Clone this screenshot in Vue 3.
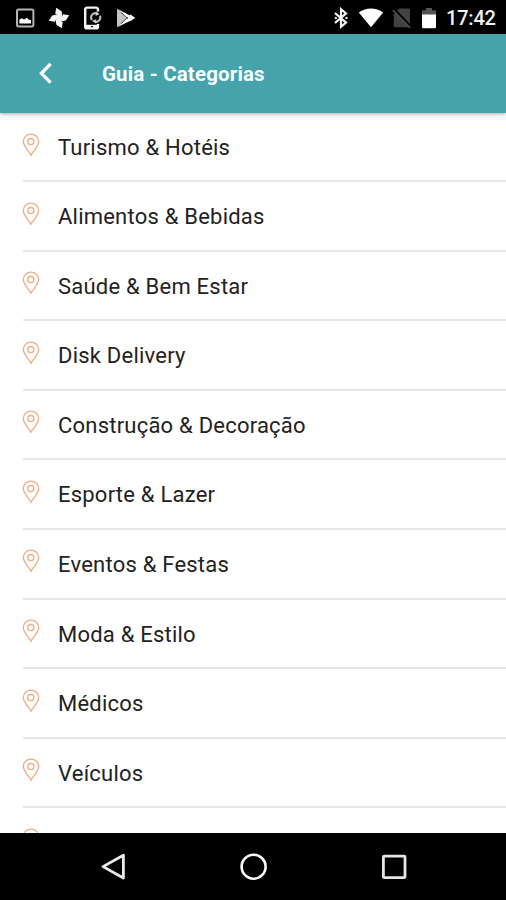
<script setup>
const categories = [
  'Turismo & Hotéis',
  'Alimentos & Bebidas',
  'Saúde & Bem Estar',
  'Disk Delivery',
  'Construção & Decoração',
  'Esporte & Lazer',
  'Eventos & Festas',
  'Moda & Estilo',
  'Médicos',
  'Veículos',
  '',
]
const blades = [0, 90, 180, 270]
</script>

<template>
  <div class="screen">
    <div class="status">
      <div class="notifications">
        <svg width="20" height="20" viewBox="0 0 20 20">
          <rect x="2" y="1.4" width="16.4" height="17" rx="1.6" fill="none" stroke="#b5b5b5" stroke-width="2" />
          <path d="M4.4 15.6v-4.2l2.6-1.2 2 1.4 3-1.8 1.6 1.8 2.4.6v3.4z" fill="#fff" />
        </svg>
        <svg width="22" height="22" viewBox="0 0 22 22">
          <path
            v-for="angle in blades"
            :key="angle"
            d="M11.6 11.6 9.6 8 7.2 6.8 8.2.8l5.4 3.4.8 4.6-2 2.8z"
            fill="#f4f4f4"
            :transform="`rotate(${angle} 11 11)`"
          />
        </svg>
        <svg width="20" height="24" viewBox="0 0 20 24">
          <path d="M15 5.4V3.6a2 2 0 0 0-2-2H4.2a2 2 0 0 0-2 2v16.8a2 2 0 0 0 2 2H13a2 2 0 0 0 2-2V18" fill="none" stroke="#f4f4f4" stroke-width="2.4" />
          <path d="M2 18.8h13.2v3.4H2z" fill="#f4f4f4" />
          <path d="M7.8 20.7h2.2" stroke="#111" stroke-width="1.2" />
          <path d="M9 14a4.2 4.2 0 0 1 5.4-6.2M16.9 9.8a4.2 4.2 0 0 1-5.6 5.6" fill="none" stroke="#bbb" stroke-width="2" />
          <path d="m13 5.4 3.6 2.6-4 2zM12.8 17.6 9 14.8l4.2-1.6z" fill="#ccc" />
        </svg>
        <svg width="20" height="20" viewBox="0 0 20 20">
          <path d="M1 .8 11 10 1 19.2z" fill="#c4c4c4" />
          <path d="M1 .8 15 8l-3.4 2.2zM1 19.2l14-6.6-3.4-2.8z" fill="#fff" />
          <path d="m14.4 6.6 4.8 3.2-4.8 3.4-3.4-3.4z" fill="#f8f8f8" />
          <path d="m5 4.4 7 6.4M5 15.6l7-6.4" stroke="#555" stroke-width="1" />
        </svg>
      </div>
      <div class="system">
        <svg width="16" height="22" viewBox="0 0 16 22">
          <path d="m2 6 11 9.6-5 4.2V2.2l5 4.2L2 16" fill="none" stroke="#f4f4f4" stroke-width="2.2" />
          <circle cx="2.8" cy="11" r="1.2" fill="#ddd" /><circle cx="13.4" cy="11" r="1.3" fill="#ddd" />
        </svg>
        <svg class="wifi" width="26" height="20" viewBox="0 0 26 20">
          <path d="M.8 4.6C8-.8 18-.8 25.2 4.6L13 19.2z" fill="#fff" />
        </svg>
        <svg class="sim" width="20" height="22" viewBox="0 0 20 22">
          <path d="M7.3 1.6h9.1c1 0 1.6.6 1.6 1.6v15.6c0 .8-.5 1.4-1.4 1.4H3.3c-.9 0-1.5-.6-1.5-1.4V7z" fill="#424242" />
          <path d="m2 2.2 17 17.6" stroke="#000" stroke-width="2.4" />
          <path d="m.8 3 17.4 17.8" stroke="#4d4d4d" stroke-width="1.7" />
        </svg>
        <svg class="battery" width="16" height="22" viewBox="0 0 16 22">
          <path d="M1 3.2h4V1h6v2.2h4V8H1z" fill="#555" />
          <path d="M1 7.5h14v12.6c0 .7-.4 1.1-1 1.1H2c-.6 0-1-.4-1-1.1z" fill="#fff" />
        </svg>
        <span class="clock">17:42</span>
      </div>
    </div>

    <header class="bar">
      <svg width="16" height="24" viewBox="0 0 16 24">
        <path d="M13.6 1.9 4.4 11.3l9.2 9.4" fill="none" stroke="#fff" stroke-width="3.3" />
      </svg>
      <h1>Guia - Categorias</h1>
    </header>

    <main class="list">
      <div v-for="(name, i) in categories" :key="i" class="row">
        <svg class="pin" width="18" height="24" viewBox="0 0 18 24">
          <path d="M9 22.2C7.6 19.2 1.3 13.4 1.3 8.5a7.7 7.4 0 0 1 15.4 0C16.7 13.4 10.4 19.2 9 22.2z" />
          <circle cx="8.8" cy="8.6" r="3.1" />
        </svg>
        <span>{{ name }}</span>
      </div>
    </main>

    <nav class="nav">
      <svg width="28" height="30" viewBox="0 0 28 30">
        <path d="M24.4 3.2v22.8L4 14.6z" fill="none" stroke="#ececec" stroke-width="2.8" stroke-linejoin="round" />
      </svg>
      <svg width="28" height="30" viewBox="0 0 28 30">
        <circle cx="13.6" cy="14.7" r="12" fill="none" stroke="#fafafa" stroke-width="2.6" />
      </svg>
      <svg width="28" height="30" viewBox="0 0 28 30">
        <rect x="3.4" y="4.1" width="21.6" height="21.6" rx="1" fill="none" stroke="#e6e6e6" stroke-width="2.8" />
      </svg>
    </nav>
  </div>
</template>

<style>
body {
  margin: 0;
}
</style>

<style scoped>
.screen {
  width: 506px;
  height: 900px;
  display: flex;
  flex-direction: column;
  overflow: hidden;
  background: #fff;
  font-family: Roboto, sans-serif;
}
svg {
  display: block;
  flex: none;
}
.status {
  height: 34px;
  flex: none;
  box-sizing: border-box;
  background: #000;
  display: flex;
  align-items: center;
  justify-content: space-between;
  padding: 1px 10px 0 15px;
}
.notifications {
  display: flex;
  align-items: center;
  gap: 13px;
}
.system {
  display: flex;
  align-items: center;
}
.wifi {
  margin-left: 9px;
}
.sim {
  margin-left: 8px;
}
.battery {
  margin-left: 9px;
}
.clock {
  margin-left: 9px;
  color: #f2f2f2;
  font-size: 20px;
  font-weight: 500;
  line-height: 34px;
  letter-spacing: -0.2px;
  width: 50px;
  white-space: nowrap;
}
.bar {
  height: 79px;
  flex: none;
  box-sizing: border-box;
  position: relative;
  background: #46a3ab;
  box-shadow: 0 1px 4px rgba(0, 0, 0, 0.35);
  display: flex;
  align-items: center;
  padding-left: 37px;
}
h1 {
  margin: 0 0 0 49px;
  color: #f7ffff;
  font-size: 20.5px;
  font-weight: 700;
  line-height: 28px;
  letter-spacing: 0.15px;
  white-space: nowrap;
}
.list {
  flex: 1;
  min-height: 0;
  overflow: hidden;
  display: flex;
  flex-direction: column;
}
.row {
  height: 69.6px;
  flex: none;
  box-sizing: border-box;
  margin-left: 23px;
  border-bottom: 2px solid #e7e7e7;
  display: flex;
  align-items: flex-start;
  color: #222;
  font-size: 22px;
  line-height: 30px;
  letter-spacing: 0.22px;
  white-space: nowrap;
}
.row:first-child {
  height: 69px;
}
.row span {
  margin: 20px 0 0 18px;
}
.pin {
  margin: 19.5px 0 0 -1px;
  fill: none;
  stroke: #f0ac85;
  stroke-width: 1.3;
}
.nav {
  height: 67px;
  flex: none;
  box-sizing: border-box;
  padding-left: 1px;
  background: #000;
  display: flex;
  align-items: center;
  justify-content: center;
  gap: 112.5px;
}
</style>
